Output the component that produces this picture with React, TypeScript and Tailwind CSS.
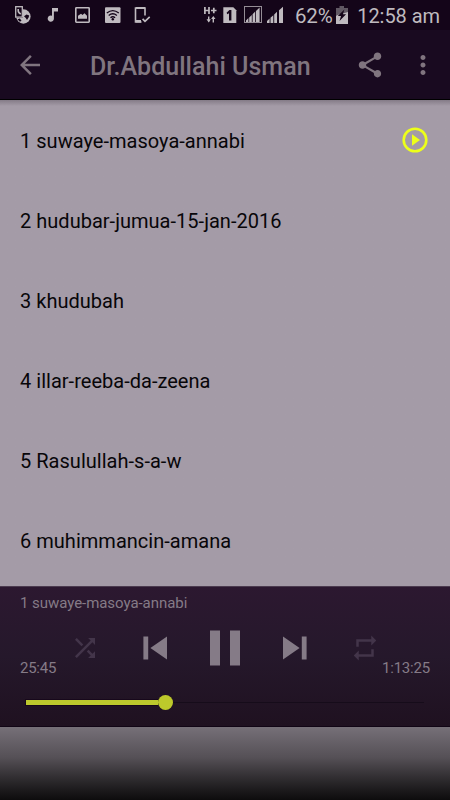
import React from 'react';

const tracks = [
  'suwaye-masoya-annabi',
  'hudubar-jumua-15-jan-2016',
  'khudubah',
  'illar-reeba-da-zeena',
  'Rasulullah-s-a-w',
  'muhimmancin-amana',
];

function Icon({ d, className }: { d: string; className: string }) {
  return (
    <svg viewBox="0 0 24 24" fill="currentColor" className={`shrink-0 ${className}`}>
      <path d={d} />
    </svg>
  );
}

function StatusBar() {
  return (
    <div className="flex h-[30px] items-center bg-[#140519] pr-2.5 pl-[14px] text-[#bfbabf]">
      <svg className="h-[20px] w-[18px] shrink-0" viewBox="14 5 18 20">
        <circle cx="23.4" cy="16.5" r="7.2" fill="currentColor" />
        <path d="M24 16.2l2.6-1.6 2.6 1-.6 2-1.6 2.4-1.2-2z" fill="#140519" />
        <path d="M17.5 19.2l2.4-.6 1.6 2.2-1.6 1z" fill="#140519" />
        <rect x="14.9" y="6" width="8" height="12" fill="#140519" />
        <rect x="15.7" y="6.7" width="6.6" height="10.4" fill="none" stroke="currentColor" strokeWidth="1.3" />
        <path d="M18.2 9v1.6c0 1.6 1 2.8 2.6 3.4" fill="none" stroke="currentColor" strokeWidth="1.6" />
      </svg>
      <svg className="ml-[15px] h-[16px] w-[12px] shrink-0" viewBox="47 7 12 16" fill="currentColor">
        <path d="M52 8h6v3.4h-4.1v7.3a3.1 3.1 0 1 1-1.9-2.9z" />
      </svg>
      <svg className="ml-[15px] h-[18px] w-[17px] shrink-0" viewBox="74 6 17 18">
        <rect x="75.8" y="7.8" width="13.4" height="14.4" rx="0.6" fill="none" stroke="currentColor" strokeWidth="1.6" />
        <path d="M78 18.7v-3l3-2 1.5 1.4 2-1.9 2.5 2.5v3z" fill="currentColor" />
      </svg>
      <svg className="ml-[13px] h-[18px] w-[17px] shrink-0" viewBox="104 6 17 18">
        <rect x="105" y="7.3" width="15.5" height="15.6" rx="1" fill="currentColor" />
        <g fill="none" stroke="#140519" strokeWidth="1.3">
          <path d="M106.8 13q6-4.8 12 0M108.7 15.4q4.1-3.3 8.2 0M110.5 17.7q2.3-2 4.6 0" />
        </g>
        <circle cx="112.8" cy="19.3" r="1.2" fill="#140519" />
      </svg>
      <svg className="ml-[12px] h-[18px] w-[18px] shrink-0" viewBox="133 6 18 18">
        <path d="M145 15.5V8h-9.5v14h6" fill="none" stroke="currentColor" strokeWidth="1.6" />
        <path d="M136 20h5v2.5h-5zM136 7h9v2h-9z" fill="currentColor" />
        <path d="M142.6 18.8l2.4 2.5 4.7-4.4" fill="none" stroke="currentColor" strokeWidth="1.7" />
      </svg>
      <svg className="ml-[53px] h-[18px] w-[14px] shrink-0" viewBox="204 6 14 18" fill="none" stroke="currentColor">
        <path d="M204.9 7v7M209 7v7M205 10.5h4M211 10.5h5.5M213.8 7.8v5.4" strokeWidth="1.7" />
        <path d="M208.7 16.5v5M213.3 17.5v5" strokeWidth="1.4" />
        <path d="M206.5 19.3h4.4l-2.2 3.2zM211.1 19h4.4l-2.2-3z" fill="currentColor" stroke="none" />
      </svg>
      <svg className="ml-[5px] h-[18px] w-[14px] shrink-0" viewBox="223 6 14 18">
        <path d="M223.3 7.3h10l3 3v12.8h-13z" fill="currentColor" />
        <path d="M226.6 12.7l2.8-2.7h2v10.4H229v-7.2l-1.7 1.1z" fill="#140519" />
      </svg>
      <svg className="ml-[6px] h-[18px] w-[42px] shrink-0" viewBox="243 6 42 18">
        <rect x="244.5" y="6.5" width="17" height="16" fill="none" stroke="currentColor" strokeWidth="1" opacity="0.75" />
        <path
          d="M246 22v-1.6l2.4-2.3V22zM249.2 22v-4.6l2.6-2.5V22zM252.6 22v-7.8l2.6-2.6V22zM256 22V11l3.6-3.4V22z"
          fill="currentColor"
        />
        <path
          d="M267 23v-2l2.6-2.4V23zM270.5 23v-5.2l2.8-2.6V23zM274.2 23v-8.6l2.8-2.6V23zM279 23V10.2l4-3.4V23z"
          fill="currentColor"
        />
      </svg>
      <span className="ml-[10px] w-[38px] shrink-0 pt-px font-['Roboto'] text-[20.5px] leading-[30px] tracking-[-0.15px] whitespace-nowrap">62%</span>
      <svg className="ml-[2px] h-[20px] w-[14px] shrink-0" viewBox="336 4 14 20">
        <path d="M340.5 5h4.5v2h4v7h-12V7h3.5z" fill="#605863" />
        <path d="M337 14.5l5-1.5 7-2v12h-12z" fill="currentColor" />
        <path d="M345.4 8.6l-6.6 6.5h3.2l-1.5 5 6.6-6.8h-3.2z" fill="#140519" />
      </svg>
      <span className="ml-auto shrink-0 pt-px font-['Roboto'] text-[20px] leading-[30px] tracking-[-0.05px] whitespace-nowrap">12:58 am</span>
    </div>
  );
}

function Header() {
  return (
    <header className="flex h-[70px] items-center border-b border-black bg-[#190a20] pl-[15px] text-[#80757f]">
      <Icon className="size-[30px]" d="M20 11H7.83l5.59-5.59L12 4l-8 8 8 8 1.41-1.41L7.83 13H20v-2z" />
      <h1 className="ml-[45px] w-[265px] shrink-0 pt-[4px] font-['Roboto'] text-[25px] leading-[30px] font-medium tracking-[0.03px] whitespace-nowrap">Dr.Abdullahi Usman</h1>
      <Icon
        className="size-[30px]"
        d="M18 16.08c-.76 0-1.44.3-1.96.77L8.91 12.7c.05-.23.09-.46.09-.7s-.04-.47-.09-.7l7.05-4.11c.54.5 1.25.81 2.04.81 1.66 0 3-1.34 3-3s-1.34-3-3-3-3 1.34-3 3c0 .24.04.47.09.7L8.04 9.81C7.5 9.31 6.79 9 6 9c-1.66 0-3 1.34-3 3s1.34 3 3 3c.79 0 1.5-.31 2.04-.81l7.12 4.16c-.05.21-.08.43-.08.65 0 1.61 1.31 2.92 2.92 2.92s2.92-1.31 2.92-2.92-1.31-2.92-2.92-2.92z"
      />
      <Icon
        className="ml-[22.5px] size-[30px]"
        d="M12 8c1.1 0 2-.9 2-2s-.9-2-2-2-2 .9-2 2 .9 2 2 2zm0 2c-1.1 0-2 .9-2 2s.9 2 2 2 2-.9 2-2-.9-2-2-2zm0 6c-1.1 0-2 .9-2 2s.9 2 2 2 2-.9 2-2-.9-2-2-2z"
      />
    </header>
  );
}

function Player() {
  return (
    <section className="flex h-[141px] flex-col border-y border-t-[#4b3b4f] border-b-[#110515] bg-linear-to-b from-[#2c1830] via-[#25182b] to-[#1f1120] text-[#857b87]">
      <p className="h-[32px] pl-5 font-['Roboto'] text-[15px] leading-[32px] tracking-[-0.05px]">1 {tracks[0]}</p>
      <div className="flex h-[58px] items-start">
        <span className="w-[50px] shrink-0 pt-[40px] pl-5 font-['Roboto'] text-[15px] leading-[18px] tracking-[-0.25px]">25:45</span>
        <div className="flex h-[58px] w-[330px] shrink-0 items-center">
          <Icon
            className="ml-5 size-[30px] text-[#43354a]"
            d="M10.59 9.17L5.41 4 4 5.41l5.17 5.17 1.42-1.41zM14.5 4l2.04 2.04L4 18.59 5.41 20 17.96 7.46 20 9.5V4h-5.5zm.33 9.41l-1.41 1.41 3.13 3.13L14.5 20H20v-5.5l-2.04 2.04-3.13-3.13z"
          />
          <Icon className="ml-[31px] size-[48px]" d="M6.2 6.2h2.4v11.6H6.2zM9.7 12l8.3 5.8V6.2z" />
          <Icon className="ml-[16px] size-[60px]" d="M6 19h4V5H6v14zm8-14v14h4V5h-4z" />
          <Icon className="ml-[16px] size-[48px]" d="M6 17.8l8.3-5.8L6 6.2zM15.4 6.2h2.4v11.6h-2.4z" />
          <Icon className="ml-[31px] size-[30px] text-[#43354a]" d="M7 7h10v3l4-4-4-4v3H5v6h2V7zm10 10H7v-3l-4 4 4 4v-3h12v-6h-2v4z" />
        </div>
        <span className="mr-5 ml-auto pt-[40px] font-['Roboto'] text-[15px] leading-[18px] tracking-[-0.2px]">1:13:25</span>
      </div>
      <div className="mt-[17px] flex h-[17px] items-center pl-[26px]">
        <div className="h-[5px] w-[132px] bg-[#bdc92d] shadow-[0_0_0_1px_#17081b]" />
        <div className="size-[15px] rounded-full bg-[#bdc92b]" />
        <div className="h-px w-[251px] bg-[#160c1a]" />
      </div>
    </section>
  );
}

export default function App() {
  return (
    <main className="flex h-[800px] w-[450px] flex-col overflow-hidden bg-[#a49ba7] font-['Roboto',sans-serif]">
      <StatusBar />
      <Header />
      <div className="h-[486px] bg-linear-to-b from-[#847b87] to-[#a49ba7] to-[6px]">
        <ul className="text-[20px] tracking-[0.02px] text-[#080609]">
          {tracks.map((track, i) => (
            <li key={track} className="flex h-20 items-center justify-between pr-[20px] pl-5">
              <span className="pt-[2px] whitespace-nowrap">{i + 1} {track}</span>
              {i === 0 && (
                <svg viewBox="0 0 30 30" className="size-[30px] text-[#edff19]">
                  <circle cx="15" cy="15" r="11.3" fill="none" stroke="currentColor" strokeWidth="2.6" />
                  <path d="M12 9.3v11.4l8-5.7z" fill="currentColor" />
                </svg>
              )}
            </li>
          ))}
        </ul>
      </div>
      <Player />
      <div className="h-[73px] bg-linear-to-b from-[#767078] via-[#555056] via-42% to-[#0d0c0d]" />
    </main>
  );
}
